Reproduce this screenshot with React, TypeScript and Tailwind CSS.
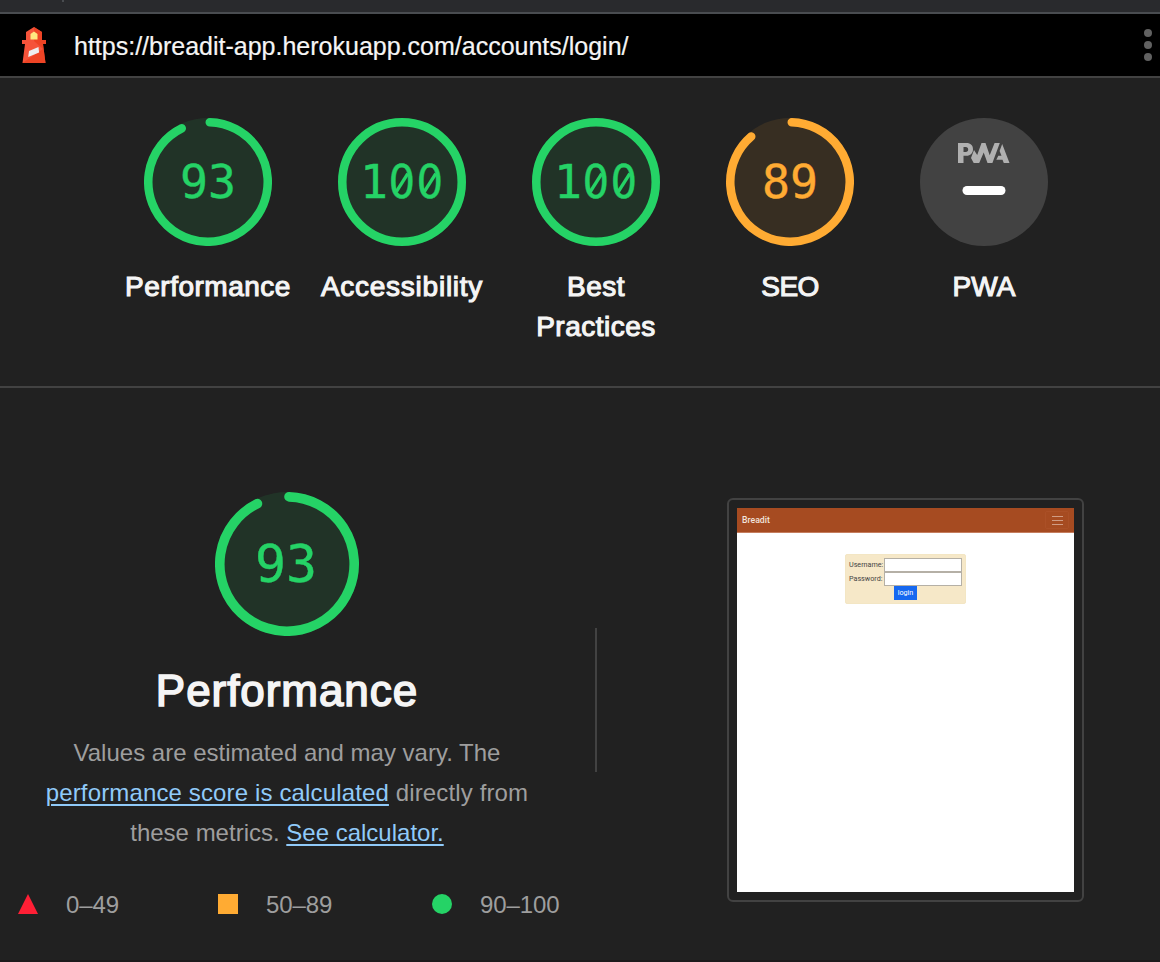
import React from "react";

const GREEN = "#25d366";
const ORANGE = "#ffab33";

const point = (c: number, r: number, deg: number) => {
  const a = (deg * Math.PI) / 180;
  return `${(c + r * Math.sin(a)).toFixed(2)} ${(c - r * Math.cos(a)).toFixed(2)}`;
};

function Zero() {
  return (
    <span className="relative inline-block w-[0.602em] text-center font-['DejaVu_Sans']">
      <span className="-mx-[0.1em] inline-block scale-x-[0.9]">0</span>
      <svg className="absolute inset-0 h-full w-full" viewBox="0 0 28 46" fill="none" preserveAspectRatio="none">
        <path d="M8.200 32.500L19.800 14.500" stroke="currentColor" strokeWidth="3.400" />
      </svg>
    </span>
  );
}

function Gauge({ score, size, color, digits }: { score: number; size: number; color: string; digits: string }) {
  const c = size / 2;
  const stroke = (size * 8) / 120;
  const r = c - stroke / 2;
  return (
    <div className="relative grid place-items-center" style={{ width: size, height: size, color }}>
      <svg className="col-start-1 row-start-1" width={size} height={size} fill="none">
        <circle cx={c} cy={c} r={c} fill={color} fillOpacity={0.1} />
        {score === 100 ? (
          <circle cx={c} cy={c} r={r} stroke={color} strokeWidth={stroke} />
        ) : (
          <path
            d={`M${point(c, r, 1.7)}A${r} ${r} 0 1 1 ${point(c, r, score * 3.6 - 0.9)}`}
            stroke={color}
            strokeWidth={stroke}
            strokeLinecap="round"
          />
        )}
      </svg>
      <span className={`col-start-1 row-start-1 font-['DejaVu_Sans_Mono'] leading-none [-webkit-text-stroke:0.4px_currentColor] ${digits}`}>
        {String(score)
          .split("")
          .map((d, i) => (d === "0" ? <Zero key={i} /> : <span key={i}>{d}</span>))}
      </span>
    </div>
  );
}

function PwaBadge() {
  return (
    <svg width="128" height="128" viewBox="0 0 128 128">
      <circle cx="64" cy="64" r="64" fill="#424242" />
      <g fill="#b0b0b0">
        <path fillRule="evenodd" d="M38 25h8.500c4 0 6.500 2.300 6.500 6.200 0 4-2.700 6.500-6.500 6.500h-3V45H38zM43.500 29v5h2.300c1.500 0 2.400-.9 2.400-2.500s-.9-2.500-2.400-2.500z" />
        <path d="M54 32l3.200 5L61.500 25h4l4.200 12.200L74.600 25h5.200L72.400 45h-4.900l-3.800-10.500L59.200 45h-5.500L51 40z" />
        <path d="M82.200 26L89.500 45h-5.700l-1.300-3.200h-6.200l2-4h3.200l-1.900-4.800z" />
      </g>
      <rect x="42.500" y="68" width="43" height="9" rx="4.500" fill="#fff" />
    </svg>
  );
}

function Lighthouse() {
  return (
    <svg width="24" height="36" viewBox="0 0 24 36">
      <path d="M12 0l8 5v8h4v4h-3l2.500 19h-23L3 17H0v-4h4V5z" fill="#f5533a" />
      <path d="M12 0l8 5v8h4v4h-3l2.500 19H.5L21 22 12 14z" fill="#eb3f1f" fillOpacity=".75" />
      <path d="M8.500 7L12 4.500 15.500 7v5.500h-7z" fill="#ffe780" />
      <path d="M7 24l9.500-4 .6 5.500L6.200 30z" fill="#eee" />
    </svg>
  );
}

function Item({ title, tracking, children }: { title: string; tracking: string; children: React.ReactNode }) {
  return (
    <div className="flex w-[194px] flex-col items-center gap-[21px]">
      {children}
      <div className={`max-w-[168px] text-center text-[28px] leading-10 text-[#f5f5f5] [-webkit-text-stroke:1.100px_#f5f5f5] ${tracking}`}>
        {title}
      </div>
    </div>
  );
}

function Field({ name }: { name: string }) {
  return (
    <div className="flex h-[14px] w-[113px] items-center justify-between">
      <span className="pt-px whitespace-nowrap">{name}</span>
      <div className="h-[14px] w-[78px] border border-[#b5b0a6] bg-white" />
    </div>
  );
}

function LoginPreview() {
  return (
    <div className="box-border h-[404px] w-[357px] rounded-[6px] border-2 border-[#424242] p-2">
      <div className="flex h-[384px] w-[337px] flex-col items-center bg-white font-['Roboto'] text-[7.200px] text-[#444]">
        <div className="flex h-[25px] w-full items-center justify-between border-b border-[#c57d5e] bg-[#a64b21] pr-[5px] pl-[5px]">
          <span className="pt-px text-[8.700px] font-medium text-[#f1e4dd]">Breadit</span>
          <div className="flex h-[18px] w-6 items-center justify-center rounded-[2px] border border-[#ab5027]">
            <svg width="11" height="10" stroke="#d09c84" strokeWidth="1">
              <path d="M0 1.500h11M0 5.500h11M0 9.500h11" />
            </svg>
          </div>
        </div>
        <div className="mt-[21px] flex h-[50px] w-[121px] flex-col items-center rounded-[2px] border border-[#f3e6c4] bg-[#f6e8c8] pt-[3px]">
          <Field name="Username:" />
          <Field name="Password:" />
          <div className="flex h-[14px] w-[23px] items-center justify-center bg-[#1668f0] pt-px text-white">login</div>
        </div>
      </div>
    </div>
  );
}

export default function App() {
  return (
    <div className="flex h-[962px] w-[1160px] flex-col overflow-hidden bg-[#212121] font-['Liberation_Sans',sans-serif]">
      <div className="flex h-[14px] shrink-0 border-b-2 border-[#494c50] bg-[#292a2d] pl-[62px]">
        <div className="h-[2px] w-[2px] bg-[#494c50]" />
      </div>
      <header className="flex h-16 shrink-0 items-center border-b-2 border-[#424242] bg-black pr-2 pl-[22px]">
        <Lighthouse />
        <span className="ml-7 pt-px text-[25px] leading-8 text-[#f5f5f5] [-webkit-text-stroke:0.200px_#f5f5f5]">
          https://breadit-app.herokuapp.com/accounts/login/
        </span>
        <div className="ml-auto flex flex-col gap-1">
          <div className="size-2 rounded-full bg-[#616161]" />
          <div className="size-2 rounded-full bg-[#616161]" />
          <div className="size-2 rounded-full bg-[#616161]" />
        </div>
      </header>

      <section className="flex h-[310px] shrink-0 border-b-2 border-[#424242] pt-10 pl-[111px]">
        <Item title="Performance" tracking="tracking-[0.500px]">
          <Gauge score={93} size={128} color={GREEN} digits="text-[46.500px]" />
        </Item>
        <Item title="Accessibility" tracking="tracking-[0.750px]">
          <Gauge score={100} size={128} color={GREEN} digits="text-[46.500px]" />
        </Item>
        <Item title="Best Practices" tracking="tracking-[0.500px]">
          <Gauge score={100} size={128} color={GREEN} digits="text-[46.500px]" />
        </Item>
        <Item title="SEO" tracking="tracking-[-0.600px]">
          <Gauge score={89} size={128} color={ORANGE} digits="text-[46.500px]" />
        </Item>
        <Item title="PWA" tracking="tracking-[0.100px]">
          <PwaBadge />
        </Item>
      </section>

      <main className="flex min-h-0 flex-1">
        <div className="flex w-[574px] flex-col items-center pt-[104px]">
          <Gauge score={93} size={144} color={GREEN} digits="pt-[2px] pr-[2px] text-[51.600px]" />
          <h1 className="mt-[31px] text-[44px] leading-[48px] tracking-[0.950px] text-[#f5f5f5] [-webkit-text-stroke:1.600px_#f5f5f5]">
            Performance
          </h1>
          <p className="mt-[18px] text-center text-[24px] leading-10 whitespace-nowrap text-[#9e9e9e]">
            Values are estimated and may vary. The
            <br />
            <span className="tracking-[0.140px]">
              <a className="text-[#90caf9] underline decoration-2 underline-offset-[3px]">performance score is calculated</a>{" "}
              directly from
            </span>
            <br />
            these metrics. <a className="text-[#90caf9] underline decoration-2 underline-offset-[3px]">See calculator.</a>
          </p>
          <div className="mt-[31px] flex h-10 w-full items-center pl-[18px] text-[24px] tracking-[-0.100px] text-[#9e9e9e]">
            <div className="flex w-[200px] items-center gap-7">
              <svg width="20" height="20">
                <path d="M10 0L20 20H0z" fill="#ff1f35" />
              </svg>
              <span className="pt-[2px]">0–49</span>
            </div>
            <div className="flex w-[214px] items-center gap-7">
              <div className="size-5 bg-[#ffab33]" />
              <span className="pt-[2px]">50–89</span>
            </div>
            <div className="flex items-center gap-7">
              <div className="size-5 rounded-full bg-[#25d366]" />
              <span className="pt-[2px]">90–100</span>
            </div>
          </div>
        </div>
        <div className="mt-[240px] ml-[21px] h-36 w-[2px] bg-[#424242]" />
        <div className="mt-[110px] ml-[130px]">
          <LoginPreview />
        </div>
      </main>
      <footer className="h-[2px] shrink-0 bg-[#1c1a1c]" />
    </div>
  );
}
